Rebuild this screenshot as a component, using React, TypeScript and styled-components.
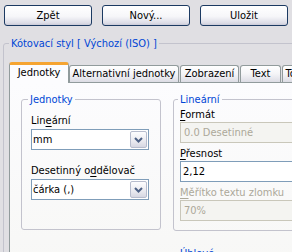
import styled, { createGlobalStyle } from 'styled-components';

const GlobalStyle = createGlobalStyle`
  html, body {
    margin: 0;
    padding: 0;
  }
  body {
    background: #e0dfe3;
    font-family: 'DejaVu Sans Condensed', 'DejaVu Sans', sans-serif;
    font-size: 11px;
    color: #000;
  }
`;

const Window = styled.div`
  width: 292px;
  height: 252px;
  overflow: hidden;
  box-sizing: border-box;
  padding: 5px 0 0 3px;
  background: #e0dfe3;
`;

const ButtonRow = styled.div`
  display: flex;
  gap: 10px;
  padding-left: 1px;
`;

const Button = styled.button`
  width: 88px;
  height: 21px;
  padding: 0;
  border: 1px solid #1c3a62;
  border-radius: 3px;
  background: linear-gradient(180deg, #ffffff 0%, #f6f6f9 55%, #dcdce6 90%, #c9c9d6 100%);
  font: inherit;
  color: #000;
`;

const Group = styled.fieldset<{ $h?: number; $w?: number; $pad: string }>`
  margin: 0;
  min-width: 0;
  box-sizing: border-box;
  border: 1px solid #c3c3cd;
  border-radius: 3px;
  padding: ${(p) => p.$pad};
  ${(p) => (p.$w ? `width: ${p.$w}px;` : '')}
  ${(p) => (p.$h ? `height: ${p.$h}px;` : '')}
`;

const Legend = styled.legend<{ $shift?: number }>`
  padding: 0 2px;
  margin-left: ${(p) => p.$shift ?? 0}px;
  line-height: 13px;
  color: #0046d5;
`;

const OuterGroup = styled(Group)`
  margin-top: 11px;
`;

const TabStrip = styled.div`
  display: flex;
  align-items: flex-end;
  height: 20px;
`;

const Tab = styled.div<{ $w: number; $active?: boolean }>`
  position: relative;
  flex: none;
  box-sizing: border-box;
  width: ${(p) => p.$w}px;
  display: flex;
  align-items: center;
  justify-content: center;
  white-space: nowrap;
  overflow: hidden;
  border: 1px solid #919b9c;
  border-bottom: none;
  border-radius: 3px 3px 0 0;
  ${(p) =>
    p.$active
      ? `
    height: 21px;
    margin-bottom: -1px;
    z-index: 1;
    border-top: 3px solid #f5a431;
    padding-bottom: 4px;
    background: #fcfcfe;
  `
      : `
    height: 17px;
    margin-right: 1px;
    padding-bottom: 2px;
    background: linear-gradient(180deg, #ffffff 0%, #f4f4f7 50%, #dcdce4 100%);
  `}
`;

const Panel = styled.div`
  display: flex;
  align-items: flex-start;
  gap: 12px;
  width: 420px;
  height: 200px;
  box-sizing: border-box;
  border: 1px solid #919b9c;
  padding: 10px 0 0 11px;
  background: linear-gradient(180deg, #fcfcfe 0%, #f7f7f5 100%);
`;

const Column = styled.div`
  display: flex;
  flex-direction: column;
  gap: 16px;
`;

const Label = styled.div<{ $top?: number; $gap: number; $disabled?: boolean }>`
  line-height: 13px;
  margin: ${(p) => p.$top ?? 0}px 0 ${(p) => p.$gap}px;
  color: ${(p) => (p.$disabled ? '#aca899' : '#000')};
  white-space: nowrap;

  u {
    text-underline-offset: 2px;
  }
`;

const Combo = styled.div`
  display: flex;
  width: 118px;
  height: 21px;
  box-sizing: border-box;
  border: 1px solid #7f9db9;
  background: #fff;
`;

const ComboText = styled.div`
  flex: 1;
  padding-left: 1px;
  line-height: 19px;
`;

const ComboButton = styled.div`
  width: 17px;
  margin: 1px;
  box-sizing: border-box;
  border: 1px solid #b7bccd;
  border-radius: 2px;
  display: flex;
  align-items: center;
  justify-content: center;
  background: linear-gradient(180deg, #fdfdfe 0%, #eaeaf0 60%, #d6d7e2 100%);
`;

const Input = styled.div<{ $disabled?: boolean }>`
  width: 140px;
  height: 21px;
  box-sizing: border-box;
  padding-left: ${(p) => (p.$disabled ? 3 : 2)}px;
  line-height: 19px;
  border: 1px solid ${(p) => (p.$disabled ? '#c9c7ba' : '#7f9db9')};
  background: ${(p) => (p.$disabled ? '#f4f4f1' : '#fff')};
  color: ${(p) => (p.$disabled ? '#aca899' : '#000')};
  white-space: nowrap;
`;

const Chevron = () => (
  <svg width="9" height="6" viewBox="0 0 9 6">
    <path d="M1 1 L4.5 4.5 L8 1" fill="none" stroke="#4d6185" strokeWidth="2" />
  </svg>
);

const Select = ({ value }: { value: string }) => (
  <Combo>
    <ComboText>{value}</ComboText>
    <ComboButton>
      <Chevron />
    </ComboButton>
  </Combo>
);

export default function App() {
  return (
    <Window>
      <GlobalStyle />
      <ButtonRow>
        <Button>Zpět</Button>
        <Button>Nový...</Button>
        <Button>Uložit</Button>
      </ButtonRow>

      <OuterGroup $pad="12px 0 0 5px" $w={420} $h={260}>
        <Legend>Kótovací styl [ Výchozí (ISO) ]</Legend>
        <TabStrip>
          <Tab $w={60} $active>
            Jednotky
          </Tab>
          <Tab $w={110}>Alternativní jednotky</Tab>
          <Tab $w={59}>Zobrazení</Tab>
          <Tab $w={41}>Text</Tab>
          <Tab $w={54}>Tolerance</Tab>
        </TabStrip>
        <Panel>
          <Group $w={140} $h={137} $pad="8px 0 0 9px">
            <Legend $shift={-3}>Jednotky</Legend>
            <Label $gap={2}>
              Lin<u>e</u>ární
            </Label>
            <Select value="mm" />
            <Label $top={14} $gap={2}>
              Desetinný o<u>d</u>dělovač
            </Label>
            <Select value="čárka (,)" />
          </Group>

          <Column>
            <Group $w={200} $h={138} $pad="2px 0 0 6px">
              <Legend $shift={-2}>Lineární</Legend>
              <Label $gap={1}>
                <u>F</u>ormát
              </Label>
              <Input $disabled>0.0 Desetinné</Input>
              <Label $top={4} $gap={1}>
                <u>P</u>řesnost
              </Label>
              <Input>2,12</Input>
              <Label $top={4} $gap={1} $disabled>
                <u>M</u>ěřítko textu zlomku
              </Label>
              <Input $disabled>70%</Input>
            </Group>
            <Group $w={200} $h={60} $pad="2px 0 0 6px">
              <Legend $shift={-2}>Úhlové</Legend>
            </Group>
          </Column>
        </Panel>
      </OuterGroup>
    </Window>
  );
}
